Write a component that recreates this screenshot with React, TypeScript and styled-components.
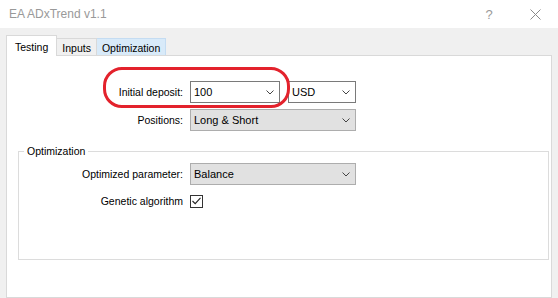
import React from 'react';
import styled, { createGlobalStyle } from 'styled-components';

const GlobalStyle = createGlobalStyle`
    html, body {
        margin: 0;
        padding: 0;
        background: #f0f0f0;
    }
    body {
        font-family: "Liberation Sans", Arial, sans-serif;
    }
`;

const Window = styled.div`
    width: 558px;
    height: 298px;
    display: flex;
    flex-direction: column;
    overflow: hidden;
    background: #f0f0f0;
    color: #000;
    font-size: 10.5px;
`;

const TitleBar = styled.div`
    height: 28px;
    flex: none;
    display: flex;
    align-items: center;
    background: #fff;
`;

const Title = styled.div`
    flex: 1;
    padding-left: 9px;
    font-size: 12px;
    color: #999;
`;

const CaptionButton = styled.div`
    width: 46px;
    height: 28px;
    display: flex;
    align-items: center;
    justify-content: center;
    color: #9a9a9a;
    font-size: 13px;
`;

const Body = styled.div`
    flex: 1;
    display: flex;
    flex-direction: column;
    padding: 7px 6px 0 6px;
`;

const TabStrip = styled.div`
    height: 20px;
    display: flex;
    align-items: flex-end;
`;

const Tab = styled.div<{ $active?: boolean; $hover?: boolean }>`
    position: relative;
    z-index: 1;
    box-sizing: border-box;
    display: flex;
    align-items: center;
    height: ${p => (p.$active ? '21px' : '17px')};
    margin-bottom: ${p => (p.$active ? '-1px' : '0')};
    padding: ${p => (p.$active ? '1px 8px 0 8px' : '1px 5px 0 5px')};
    border: 1px solid ${p => (p.$hover ? '#c4dcf2' : '#d9d9d9')};
    border-bottom: none;
    border-left-width: ${p => (p.$active ? '1px' : '0')};
    background: ${p => (p.$active ? '#fff' : p.$hover ? '#d8eaf9' : '#f0f0f0')};
    &:first-child {
        border-left-width: 1px;
    }
`;

const Panel = styled.div`
    position: relative;
    flex: 1;
    box-sizing: border-box;
    background: #fff;
    border: 1px solid #d9d9d9;
    padding: 25px 1px 0 0;
`;

const FormGrid = styled.div<{ $label: number }>`
    display: grid;
    grid-template-columns: ${p => p.$label}px auto;
    column-gap: 7px;
    row-gap: 6px;
    align-items: center;
`;

const Label = styled.div<{ $width?: number }>`
    text-align: right;
    white-space: nowrap;
    width: ${p => (p.$width ? `${p.$width}px` : 'auto')};
`;

const Controls = styled.div`
    display: flex;
    gap: 8px;
`;

const Select = styled.div<{ $width: number; $list?: boolean }>`
    box-sizing: border-box;
    width: ${p => p.$width}px;
    height: 22px;
    display: flex;
    align-items: center;
    justify-content: space-between;
    padding: 0 5px 0 3px;
    border: 1px solid ${p => (p.$list ? '#adadad' : '#7a7a7a')};
    background: ${p => (p.$list ? '#e1e1e1' : '#fff')};
    font-size: 11px;
`;

const Group = styled.fieldset`
    margin: 14px 1px 0 11px;
    padding: 5px 0 0 0;
    height: 115px;
    box-sizing: border-box;
    border: 1px solid #dcdcdc;
    min-width: 0;
`;

const Legend = styled.legend`
    margin-left: 5px;
    padding: 0 3px;
    line-height: 13px;
`;

const CheckRow = styled.div`
    display: flex;
    align-items: center;
    gap: 7px;
    height: 14px;
    margin-top: 9px;
`;

const CheckBox = styled.div`
    box-sizing: border-box;
    width: 13px;
    height: 13px;
    border: 1px solid #333;
    background: #fff;
    display: flex;
    align-items: center;
    justify-content: center;
`;

const Highlight = styled.div`
    position: absolute;
    left: 96px;
    top: 11px;
    width: 187px;
    height: 41px;
    box-sizing: border-box;
    border: 3px solid #e3222c;
    border-radius: 19px;
    pointer-events: none;
`;

const Chevron = () => (
    <svg width="8" height="5" viewBox="0 0 8 5">
        <path d="M0.5 0.5 L4 4 L7.5 0.5" fill="none" stroke="#444" strokeWidth="1" />
    </svg>
);

const Combo = ({ value, width, list }: { value: string; width: number; list?: boolean }) => (
    <Select $width={width} $list={list}>
        <span>{value}</span>
        <Chevron />
    </Select>
);

const App = () => {
    return (
        <Window>
            <GlobalStyle />
            <TitleBar>
                <Title>EA ADxTrend v1.1</Title>
                <CaptionButton>?</CaptionButton>
                <CaptionButton>
                    <svg width="11" height="11" viewBox="0 0 11 11">
                        <path d="M0.5 0.5 L10.5 10.5 M10.5 0.5 L0.5 10.5" stroke="#8a8a8a" strokeWidth="1" />
                    </svg>
                </CaptionButton>
            </TitleBar>
            <Body>
                <TabStrip>
                    <Tab $active>Testing</Tab>
                    <Tab>Inputs</Tab>
                    <Tab $hover>Optimization</Tab>
                </TabStrip>
                <Panel>
                    <FormGrid $label={176}>
                        <Label>Initial deposit:</Label>
                        <Controls>
                            <Combo value="100" width={90} />
                            <Combo value="USD" width={68} />
                        </Controls>
                        <Label>Positions:</Label>
                        <Combo value="Long & Short" width={166} list />
                    </FormGrid>
                    <Group>
                        <Legend>Optimization</Legend>
                        <FormGrid $label={164}>
                            <Label>Optimized parameter:</Label>
                            <Combo value="Balance" width={166} list />
                        </FormGrid>
                        <CheckRow>
                            <Label $width={164}>Genetic algorithm</Label>
                            <CheckBox>
                                <svg width="9" height="8" viewBox="0 0 9 8">
                                    <path d="M0.5 4 L3.2 6.7 L8.5 0.8" fill="none" stroke="#222" strokeWidth="1.1" />
                                </svg>
                            </CheckBox>
                        </CheckRow>
                    </Group>
                    <Highlight />
                </Panel>
            </Body>
        </Window>
    );
};

export default App;
